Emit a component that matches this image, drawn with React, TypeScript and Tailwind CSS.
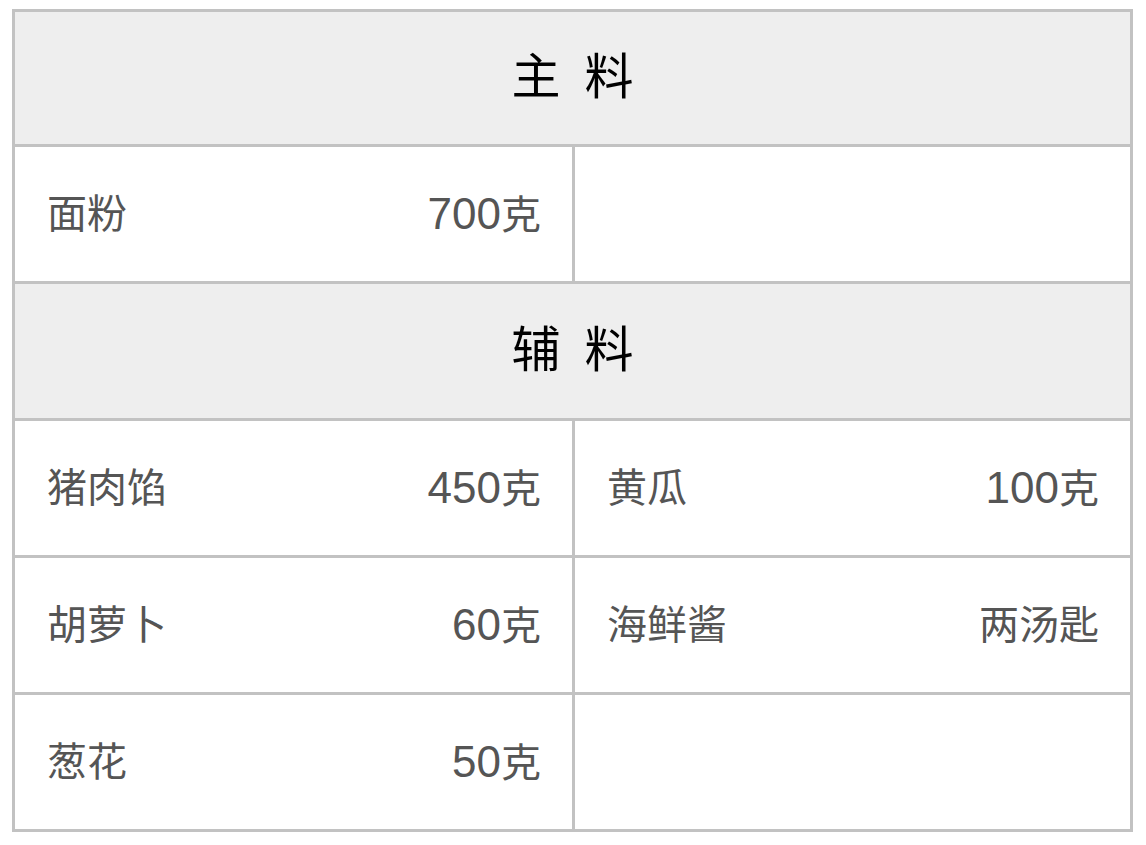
const FONT = "font-['Liberation_Sans','Noto_Sans_CJK_SC',sans-serif]";

type Item = { name: string; amount: string } | null;

const sections: { title: string[]; items: Item[] }[] = [
  { title: ["主", "料"], items: [{ name: "面粉", amount: "700克" }, null] },
  {
    title: ["辅", "料"],
    items: [
      { name: "猪肉馅", amount: "450克" },
      { name: "黄瓜", amount: "100克" },
      { name: "胡萝卜", amount: "60克" },
      { name: "海鲜酱", amount: "两汤匙" },
      { name: "葱花", amount: "50克" },
      null,
    ],
  },
];

// 数字部分稍大一些，和原图的字形宽度对齐
function Amount({ value }: { value: string }) {
  const m = value.match(/^(\d+)(.*)$/);
  if (!m) return <span>{value}</span>;
  return (
    <span>
      <span className="text-[44px]">{m[1]}</span>
      {m[2]}
    </span>
  );
}

function Cell({ item }: { item: Item }) {
  return (
    <div className="flex h-[134px] items-center justify-between bg-white pl-[32px] pr-[31px] text-[40px] leading-none text-[#555]">
      {item && (
        <>
          <span>{item.name}</span>
          <Amount value={item.amount} />
        </>
      )}
    </div>
  );
}

export default function App() {
  return (
    <div className={`min-h-screen bg-white pl-[12px] pt-[9px] ${FONT}`}>
      <div className="grid w-[1121px] grid-cols-[557px_555px] gap-[3px] bg-[#c2c2c2] p-[3px]">
        {sections.map((s, idx) => (
          <div key={s.title.join("")} className="contents">
            <div
              className={`col-span-2 flex items-center justify-center gap-[24px] bg-[#eeeeee] text-[49px] text-black ${
                idx === 0 ? "h-[132px]" : "h-[134px]"
              }`}
            >
              {s.title.map((t) => (
                <span key={t}>{t}</span>
              ))}
            </div>
            {s.items.map((it, i) => (
              <Cell key={i} item={it} />
            ))}
          </div>
        ))}
      </div>
    </div>
  );
}
